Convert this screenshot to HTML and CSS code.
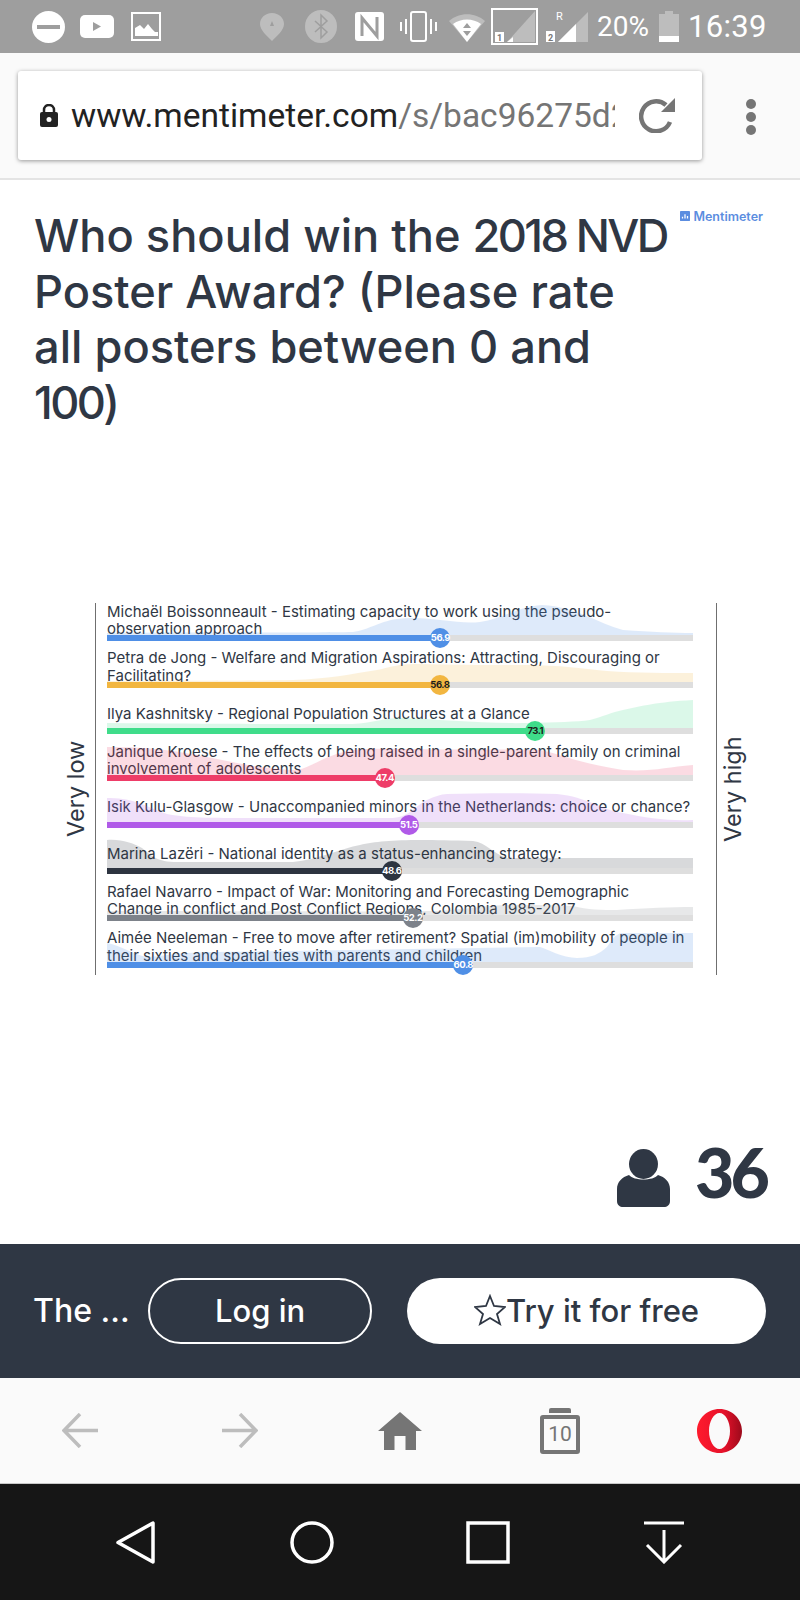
FILE: index.html
```html
<!DOCTYPE html>
<html lang="en">
  <head>
    <title>Who should win the 2018 NVD Poster Award?</title>
    <link rel="stylesheet" href="styles.css">
  </head>
  <body>
    <div class="phone">

      <div class="statusbar">
        <svg class="st-dnd" viewBox="0 0 33 32"><ellipse cx="16.500" cy="16" rx="16.500" ry="16" fill="#fff"/><rect x="5" y="14" width="23" height="4" fill="#9e9e9e"/></svg>
        <svg class="st-yt" viewBox="0 0 34 23"><rect width="34" height="23" rx="5" fill="#fff"/><path d="M13 7l8 4.500-8 4.500z" fill="#9e9e9e"/></svg>
        <svg class="st-img" viewBox="0 0 30 29"><rect x="1" y="1" width="28" height="27" fill="none" stroke="#fff" stroke-width="2"/><path d="M4 24V16l5-3 4 4 4-5 4 5 3 3 3 0v4z" fill="#fff"/></svg>
        <svg class="st-loc" viewBox="0 0 24 28"><path d="M12 0C5 0 0 5 0 11c0 6 7 12 12 17 5-5 12-11 12-17C24 5 19 0 12 0z" fill="#bdbdbd"/><path d="M12 8l2 5h-4z" fill="#9e9e9e"/></svg>
        <svg class="st-bt" viewBox="0 0 32 33"><ellipse cx="16" cy="16.500" rx="16" ry="16.500" fill="#bdbdbd"/><path d="M10 11l12 11-6 6V5l6 6-12 11" fill="none" stroke="#9e9e9e" stroke-width="1.500"/></svg>
        <svg class="st-nfc" viewBox="0 0 29 29"><rect width="29" height="29" rx="3" fill="#fff"/><path d="M7 24V6l15 18V5" fill="none" stroke="#9e9e9e" stroke-width="3"/></svg>
        <svg class="st-vib" viewBox="0 0 41 31"><rect x="13" y="1" width="15" height="29" rx="2" fill="none" stroke="#fff" stroke-width="2"/><path d="M8 8v15M3 11v9M33 8v15M38 11v9" stroke="#fff" stroke-width="2"/></svg>
        <svg class="st-wifi" viewBox="0 0 36 30"><path d="M0 9C10 0 26 0 36 9L18 30z" fill="#bdbdbd"/><path d="M4 12C12 6 24 6 32 12L18 30z" fill="#fff"/><path d="M18 11l4 5H14zM14 19h8l-4 5z" fill="#9e9e9e"/></svg>
        <svg class="st-sim1" viewBox="0 0 47 37"><rect x="1" y="1" width="45" height="35" fill="none" stroke="#fff" stroke-width="2"/><path d="M44 3v31H16z" fill="#bdbdbd"/><path d="M16 34h6v-5z" fill="#fff"/><rect x="4" y="24" width="9" height="10" fill="#fff"/><text x="8.500" y="33" class="sim-num">1</text></svg>
        <div class="st-sim2">
          <svg viewBox="0 0 42 30"><path d="M42 0v30H12z" fill="#bdbdbd"/><path d="M30 12v18H12z" fill="#fff"/><rect x="0" y="19" width="9" height="11" fill="#fff"/><text x="4.500" y="29" class="sim-num">2</text></svg>
          <span class="st-r">R</span>
        </div>
        <span class="st-pct">20%</span>
        <svg class="st-batt" viewBox="0 0 20 31"><path d="M6 0h8v3h6v28H0V3h6z" fill="#bdbdbd"/><rect y="25" width="20" height="6" fill="#fff"/></svg>
        <span class="st-time">16:39</span>
      </div>

      <div class="addressbar">
        <div class="urlcard">
          <svg class="lock" viewBox="0 0 18 23"><path d="M4 10V6a5 5 0 0 1 10 0v4" fill="none" stroke="#222" stroke-width="2.500"/><rect y="8" width="18" height="15" rx="2" fill="#222"/><circle cx="9" cy="15.500" r="2.500" fill="#fff"/></svg>
          <div class="url"><span class="url-host">www.mentimeter.com</span>/s/bac96275d2</div>
          <svg class="reload" viewBox="0 0 37 35"><path d="M31 24A15 15 0 1 1 27 7" fill="none" stroke="#757575" stroke-width="4.500"/><path d="M36 0v14H22z" fill="#757575"/></svg>
        </div>
        <div class="menudots"><i></i><i></i><i></i></div>
      </div>

      <div class="slide">
        <div class="slide-head">
          <h1 class="title">Who should win the <span class="tight">2018 NVD</span><br>Poster Award? (Please rate<br>all posters between 0 and<br><span class="tight">100)</span></h1>
          <div class="brand">
            <svg viewBox="0 0 12 12"><rect width="12" height="12" rx="1" fill="#5b8de0"/><path d="M3 9V7M6 9V4M9 9V6" stroke="#fff" stroke-width="1.500"/></svg>
            Mentimeter
          </div>
        </div>

        <div class="chart">
          <div class="axis-label axis-low">Very low</div>
          <div class="rows">

            <div class="row blue">
              <div class="label"><span>Michaël Boissonneault - Estimating capacity to work using the pseudo-<br>observation approach</span></div>
              <svg class="area" viewBox="0 0 586 30" preserveAspectRatio="none"><path d="M0 30V28C100 27 200 28 246 27C262 25 270 17 290 14C320 10 350 20 373 17C395 14 410 2 435 0C470 2 490 18 516 25C545 27 565 28 586 28V30Z"/></svg>
              <div class="track"><div class="fill" style="width:56.9%"><span class="knob">56.9</span></div></div>
            </div>

            <div class="row yellow">
              <div class="label"><span>Petra de Jong - Welfare and Migration Aspirations: Attracting, Discouraging or<br>Facilitating?</span></div>
              <svg class="area" viewBox="0 0 586 30" preserveAspectRatio="none"><path d="M0 30V29C80 29 150 29 186 28C220 27 245 22 270 18C285 15 290 12 310 12C350 13 380 13 420 13C450 13 480 17 500 19C530 21 560 21 586 21V30Z"/></svg>
              <div class="track"><div class="fill" style="width:56.8%"><span class="knob">56.8</span></div></div>
            </div>

            <div class="row green">
              <div class="label"><span>Ilya Kashnitsky - Regional Population Structures at a Glance</span></div>
              <svg class="area" viewBox="0 0 586 30" preserveAspectRatio="none"><path d="M0 30V25C100 26 200 26 246 26C265 25 275 20 295 20C330 21 380 26 420 25C450 24 470 24 483 22C495 19 505 14 516 12C535 8 550 4 586 2V30Z"/></svg>
              <div class="track"><div class="fill" style="width:73.1%"><span class="knob">73.1</span></div></div>
            </div>

            <div class="row red">
              <div class="label"><span>Janique Kroese - The effects of being raised in a single-parent family on criminal<br>involvement of adolescents</span></div>
              <svg class="area" viewBox="0 0 586 30" preserveAspectRatio="none"><path d="M0 30V2C40 2 65 5 100 12C130 18 160 25 190 25C205 22 215 12 240 6C260 3 270 4 300 4C350 5 400 4 433 5C450 8 470 18 516 25C545 27 560 22 586 20V30Z"/></svg>
              <div class="track"><div class="fill" style="width:47.4%"><span class="knob">47.4</span></div></div>
            </div>

            <div class="row purple">
              <div class="label"><span>Isik Kulu-Glasgow - Unaccompanied minors in the Netherlands: choice or chance?</span></div>
              <svg class="area" viewBox="0 0 586 30" preserveAspectRatio="none"><path d="M0 30V6C25 5 40 15 60 22C80 26 100 26 150 26L286 26C300 25 305 18 316 10C325 5 335 2 340 2C380 1 420 1 450 2C480 5 495 18 516 21C540 26 560 29 586 28V30Z"/></svg>
              <div class="track"><div class="fill" style="width:51.5%"><span class="knob">51.5</span></div></div>
            </div>

            <div class="row dark">
              <div class="label"><span>Marina Lazëri - National identity as a status-enhancing strategy:</span></div>
              <svg class="area" viewBox="0 0 586 30" preserveAspectRatio="none"><path d="M0 30V2C15 1 25 5 35 10C45 18 50 24 70 24L186 24C210 22 235 10 253 7C275 2 300 1 366 3C380 5 385 15 400 20C420 20 450 20 586 20V30Z"/></svg>
              <div class="track"><div class="fill" style="width:48.6%"><span class="knob">48.6</span></div></div>
            </div>

            <div class="row grey">
              <div class="label"><span>Rafael Navarro - Impact of War: Monitoring and Forecasting Demographic<br>Change in conflict and Post Conflict Regions, Colombia 1985-2017</span></div>
              <svg class="area" viewBox="0 0 586 30" preserveAspectRatio="none"><path d="M0 30V26C100 26 250 27 330 26C360 24 385 20 400 20C430 20 450 20 466 21C480 25 495 25 510 25C540 23 565 22 586 22V30Z"/></svg>
              <div class="track"><div class="fill" style="width:52.2%"><span class="knob">52.2</span></div></div>
            </div>

            <div class="row blue">
              <div class="label"><span>Aimée Neeleman - Free to move after retirement? Spatial (im)mobility of people in<br>their sixties and spatial ties with parents and children</span></div>
              <svg class="area" viewBox="0 0 586 30" preserveAspectRatio="none"><path d="M0 30V11C15 14 25 22 40 25C60 24 70 20 110 20L433 15C440 17 455 26 470 26C485 26 492 22 500 15C505 8 508 2 515 1L586 1V30Z"/></svg>
              <div class="track"><div class="fill" style="width:60.8%"><span class="knob">60.8</span></div></div>
            </div>

          </div>
          <div class="axis-label axis-high">Very high</div>
        </div>

        <div class="voters">
          <svg class="person" viewBox="0 0 53 58"><ellipse cx="26.500" cy="15" rx="14.500" ry="15" fill="#2f3744"/><path d="M0 52V40C0 33 5 28 12 26C17 32 36 32 41 26C48 28 53 33 53 40V52C53 56 50 58 47 58H6C3 58 0 56 0 52z" fill="#2f3744"/></svg>
          <span class="count">36</span>
        </div>
      </div>

      <div class="cta">
        <span class="cta-text">The ...</span>
        <div class="btn btn-login">Log in</div>
        <div class="btn btn-try">
          <svg viewBox="0 0 32 32"><path d="M16 2l4 10 11 1-8 7 3 10-10-6-10 6 3-10-8-7 11-1z" fill="none" stroke="#2f3744" stroke-width="1.800"/></svg>
          Try it for free
        </div>
      </div>

      <div class="browserbar">
        <svg class="b-back" viewBox="0 0 36 35"><path d="M18 1L2 17.500 18 34M2 17.500H36" fill="none" stroke="#bdbdbd" stroke-width="3.500"/></svg>
        <svg class="b-fwd" viewBox="0 0 36 35"><path d="M18 1L34 17.500 18 34M34 17.500H0" fill="none" stroke="#bdbdbd" stroke-width="3.500"/></svg>
        <svg class="b-home" viewBox="0 0 44 38"><path d="M22 0L44 19H38V38H27.500V24H16.500V38H6V19H0z" fill="#757575"/></svg>
        <div class="b-tabs"><span>10</span></div>
        <svg class="b-opera" viewBox="0 0 45 44">
          <defs><linearGradient id="opera" x1="0" x2="1" y1="0" y2="0"><stop offset="0" stop-color="#ff1b2d"/><stop offset="0.600" stop-color="#e5112a"/><stop offset="1" stop-color="#9c0a1b"/></linearGradient></defs>
          <path fill-rule="evenodd" d="M22.500 0C35 0 45 10 45 22S35 44 22.500 44 0 34 0 22 10 0 22.500 0zM22.500 4C17 4 12 12 12 22s5 18 10.500 18S33 32 33 22 28 4 22.500 4z" fill="url(#opera)"/>
        </svg>
      </div>

      <div class="navbar">
        <svg class="n-back" viewBox="0 0 39 43"><path d="M37 2V41L2 21.500z" fill="none" stroke="#fff" stroke-width="3.500" stroke-linejoin="round"/></svg>
        <svg class="n-home" viewBox="0 0 44 43"><ellipse cx="22" cy="21.500" rx="20" ry="19.500" fill="none" stroke="#fff" stroke-width="3.500"/></svg>
        <svg class="n-recent" viewBox="0 0 44 43"><rect x="2" y="2" width="40" height="39" fill="none" stroke="#fff" stroke-width="3.500"/></svg>
        <svg class="n-down" viewBox="0 0 40 43"><path d="M0 2H40M20 9V41M3 24L20 41 37 24" fill="none" stroke="#fff" stroke-width="3"/></svg>
      </div>

    </div>
  </body>
</html>
```

FILE: styles.css
```css
* {
  box-sizing: border-box;
}

body {
  margin: 0;
  font-family: "Inter", "Liberation Sans", sans-serif;
  color: #2f3744;
}

.phone {
  display: flex;
  flex-direction: column;
  width: 800px;
  height: 1600px;
  overflow: hidden;
  background-color: #fff;
}

/* status bar */
.statusbar {
  display: flex;
  align-items: center;
  flex: none;
  height: 53px;
  padding-left: 32px;
  background-color: #9e9e9e;
  color: #fff;
  font-family: "Roboto", sans-serif;
}

.statusbar svg {
  display: block;
  flex: none;
}

.sim-num {
  font-size: 9px;
  font-weight: 700;
  text-anchor: middle;
  fill: #777;
}

.st-dnd { width: 33px; height: 32px; }
.st-yt { width: 34px; height: 23px; margin-left: 15px; }
.st-img { width: 30px; height: 29px; margin-left: 17px; }
.st-loc { width: 24px; height: 28px; margin-left: 99px; }
.st-bt { width: 32px; height: 33px; margin-left: 21px; }
.st-nfc { width: 29px; height: 29px; margin-left: 18px; }
.st-vib { width: 41px; height: 31px; margin-left: 14px; }
.st-wifi { width: 36px; height: 30px; margin-left: 10px; }
.st-sim1 { width: 47px; height: 37px; margin-left: 6px; }
.st-batt { width: 20px; height: 31px; margin-left: 10px; }

.st-sim2 {
  position: relative;
  flex: none;
  width: 42px;
  height: 30px;
  margin-left: 8px;
}

.st-sim2 svg {
  width: 42px;
  height: 30px;
}

.st-r {
  position: absolute;
  left: 10px;
  top: -2px;
  font-size: 11px;
}

.st-pct {
  margin-left: 9px;
  font-size: 28px;
}

.st-time {
  margin-left: 9px;
  font-size: 31px;
  letter-spacing: 0.3px;
}

/* address bar */
.addressbar {
  display: flex;
  align-items: flex-start;
  flex: none;
  height: 127px;
  padding: 18px 0 0 18px;
  background-color: #fafafa;
  border-bottom: 2px solid #e4e4e4;
}

.urlcard {
  display: flex;
  align-items: center;
  width: 684px;
  height: 89px;
  padding-left: 22px;
  background-color: #fff;
  border-radius: 3px;
  box-shadow: 0 1px 4px rgba(0, 0, 0, 0.4);
}

.lock {
  flex: none;
  width: 18px;
  height: 23px;
}

.url {
  width: 544px;
  margin-left: 13px;
  overflow: hidden;
  white-space: nowrap;
  font-family: "Roboto", sans-serif;
  font-size: 33.5px;
  color: #757575;
}

.url-host {
  color: #222;
}

.reload {
  flex: none;
  width: 37px;
  height: 35px;
  margin-left: 24px;
}

.menudots {
  display: flex;
  flex-direction: column;
  gap: 3px;
  margin: 28px 0 0 44px;
}

.menudots i {
  width: 10px;
  height: 10px;
  border-radius: 50%;
  background-color: #757575;
}

/* slide */
.slide {
  flex: 1;
  display: flex;
  flex-direction: column;
  min-height: 0;
  padding: 26px 0 0 0;
}

.slide-head {
  display: flex;
  flex: none;
  justify-content: space-between;
  height: 397px;
  padding-left: 34px;
  padding-right: 37px;
}

.title {
  margin: 2px 0 0;
  font-size: 45.2px;
  font-weight: 500;
  line-height: 55.7px;
  white-space: nowrap;
}

.tight {
  letter-spacing: -2.6px;
}

.brand {
  display: flex;
  align-items: center;
  gap: 3px;
  height: 14px;
  margin-top: 3px;
  font-size: 12.5px;
  font-weight: 600;
  color: #5b8de0;
}

.brand svg {
  width: 10px;
  height: 10px;
}

.chart {
  display: flex;
  flex: none;
  height: 372px;
  padding-left: 62px;
}

.axis-label {
  flex: none;
  width: 33px;
  writing-mode: vertical-rl;
  transform: rotate(180deg);
  text-align: center;
  font-size: 23.5px;
  line-height: 27px;
}

.axis-high {
  width: 30px;
  margin-left: 2px;
}

.rows {
  display: flex;
  flex-direction: column;
  gap: 11.7px;
  width: 622px;
  padding: 3px 23px 0 11px;
  border-left: 1px solid #6f6f6f;
  border-right: 1px solid #6f6f6f;
}

.row {
  position: relative;
  flex: none;
  width: 586px;
  height: 35px;
}

.label {
  display: flex;
  align-items: center;
  height: 28px;
  margin-bottom: 1px;
  white-space: nowrap;
  font-size: 15px;
  line-height: 17.5px;
}

.area {
  position: absolute;
  left: 0;
  bottom: 6px;
  width: 586px;
  height: 30px;
  opacity: 0.18;
}

.track {
  position: relative;
  height: 6px;
  background-color: #dedede;
}

.fill {
  position: relative;
  height: 6px;
}

.knob {
  position: absolute;
  right: -10px;
  top: -7px;
  width: 20px;
  height: 20px;
  border-radius: 50%;
  text-align: center;
  font-size: 9.5px;
  font-weight: 700;
  line-height: 20px;
  letter-spacing: -0.5px;
  color: #fff;
}

.blue .fill, .blue .knob { background-color: #4f8fe6; }
.yellow .fill, .yellow .knob { background-color: #f2b640; }
.green .fill, .green .knob { background-color: #3fdc8a; }
.red .fill, .red .knob { background-color: #ee3d68; }
.purple .fill, .purple .knob { background-color: #b05ae8; }
.dark .fill, .dark .knob { background-color: #2d3440; }
.grey .fill, .grey .knob { background-color: #7d828a; }

.blue .area { fill: #4f8fe6; }
.yellow .area { fill: #f2b640; }
.green .area { fill: #3fdc8a; }
.red .area { fill: #ee3d68; }
.purple .area { fill: #b05ae8; }
.dark .area { fill: #2d3440; }
.grey .area { fill: #7d828a; }

.yellow .knob, .green .knob {
  color: #1c1c1c;
}

.voters {
  display: flex;
  flex: none;
  align-items: flex-start;
  justify-content: flex-end;
  gap: 25px;
  margin-top: 172px;
  padding-right: 34px;
}

.person {
  width: 53px;
  height: 58px;
  margin-top: 2px;
}

.count {
  font-family: "Lato", sans-serif;
  font-size: 68px;
  font-weight: 900;
  line-height: 50px;
  letter-spacing: -4px;
}

/* sign up strip */
.cta {
  display: flex;
  align-items: center;
  flex: none;
  height: 134px;
  padding-left: 33px;
  background-color: #2f3744;
  color: #fff;
  font-size: 32px;
  font-weight: 500;
}

.cta-text {
  width: 115px;
  padding-bottom: 2px;
}

.btn {
  display: flex;
  align-items: center;
  justify-content: center;
  height: 66px;
  padding-bottom: 2px;
  border-radius: 33px;
  font-size: 31px;
}

.btn-login {
  width: 224px;
  border: 2px solid #fff;
}

.btn-try {
  width: 359px;
  margin-left: 35px;
  background-color: #fff;
  color: #2f3744;
}

.btn-try svg {
  width: 32px;
  height: 32px;
}

/* browser toolbar */
.browserbar {
  display: flex;
  align-items: center;
  flex: none;
  height: 106px;
  padding-left: 62px;
  background-color: #fafafa;
  border-bottom: 1px solid #c8c8c8;
}

.b-back { width: 36px; height: 35px; }
.b-fwd { width: 36px; height: 35px; margin-left: 124px; }
.b-home { width: 44px; height: 38px; margin-left: 120px; }
.b-opera { width: 45px; height: 44px; margin-left: 117px; }

.b-tabs {
  position: relative;
  width: 40px;
  height: 39px;
  margin-left: 118px;
  margin-top: 7px;
  border: 4px solid #757575;
  border-radius: 3px;
  text-align: center;
  font-family: "Roboto", sans-serif;
  font-size: 21px;
  line-height: 31px;
  color: #757575;
}

.b-tabs::before {
  content: "";
  position: absolute;
  left: 5px;
  top: -11px;
  width: 22px;
  height: 5px;
  border-radius: 2px 2px 0 0;
  background-color: #757575;
}

/* android nav */
.navbar {
  display: flex;
  align-items: flex-start;
  flex: none;
  height: 116px;
  padding: 37px 0 0 116px;
  background-color: #161616;
}

.n-back { width: 39px; height: 43px; }
.n-home { width: 44px; height: 43px; margin-left: 135px; }
.n-recent { width: 44px; height: 43px; margin-left: 132px; }
.n-down { width: 40px; height: 43px; margin-left: 134px; }
```
